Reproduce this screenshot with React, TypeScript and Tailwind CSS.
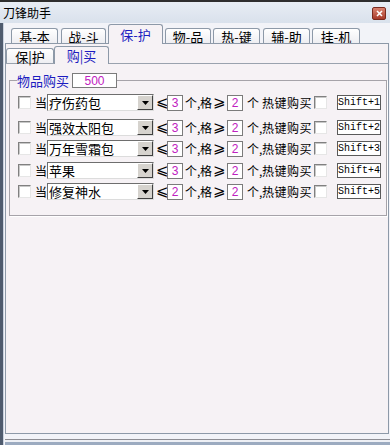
import React from 'react'

const cjk = "font-['Noto_Sans_CJK_SC','Noto_Sans_CJK_JP',sans-serif]"

const mainTabs = [
  { label: '基-本', w: 'w-[47px]', ml: 'ml-[6px]' },
  { label: '战-斗', w: 'w-[45px]', ml: 'ml-[3px]' },
  { label: '保-护', w: 'w-[55px]', ml: 'ml-[2px]', active: true },
  { label: '物-品', w: 'w-[46px]', ml: 'ml-[2px]' },
  { label: '热-键', w: 'w-[47px]', ml: 'ml-[2px]' },
  { label: '辅-助', w: 'w-[47px]', ml: 'ml-[3px]' },
  { label: '挂-机', w: 'w-[48px]', ml: 'ml-[2px]' },
]

const rows = [
  { item: '疗伤药包', lt: 3, gt: 2, key: 'Shift+1', sep: false, mt: 'mt-[6px]' },
  { item: '强效太阳包', lt: 3, gt: 2, key: 'Shift+2', sep: true, mt: 'mt-[8px]' },
  { item: '万年雪霜包', lt: 3, gt: 2, key: 'Shift+3', sep: true, mt: 'mt-[4px]' },
  { item: '苹果', lt: 3, gt: 2, key: 'Shift+4', sep: true, mt: 'mt-[5px]' },
  { item: '修复神水', lt: 2, gt: 2, key: 'Shift+5', sep: true, mt: 'mt-[4px]' },
]

const CheckBox = () => (
  <span className="block h-[13px] w-[13px] shrink-0 border border-t-[#808080] border-l-[#808080] border-b-[#e6e6e6] border-r-[#e6e6e6] bg-white shadow-[inset_1px_1px_0_#c8c8c8]" />
)

const NumBox = ({ v, ml }: { v: number; ml: string }) => (
  <span className={`${ml} flex h-[16px] w-[16px] shrink-0 items-center justify-center border border-[#7b7b7b] bg-white font-['Liberation_Sans',sans-serif] text-[12px] leading-none text-[#c020c0]`}>
    {v}
  </span>
)

const Combo = ({ value }: { value: string }) => (
  <div className="flex h-[17px] w-[107px] shrink-0 items-center border border-t-[#6e6e6e] border-l-[#6e6e6e] border-b-[#dcdcdc] border-r-[#dcdcdc] bg-white">
    <span className="flex-1 pl-[1px] text-[13px] leading-none text-black">{value}</span>
    <span className="flex h-[15px] w-[16px] items-center justify-center border border-t-white border-l-white border-b-[#404040] border-r-[#404040] bg-[#d6d3ce]">
      <svg width="7" height="4" viewBox="0 0 7 4">
        <path d="M0 0h7L3.5 4z" fill="#000" />
      </svg>
    </span>
  </div>
)

export default function App() {
  return (
    <div className={`flex h-[445px] w-[390px] flex-col overflow-hidden bg-[#f6f2f5] ${cjk}`}>
      {/* title bar */}
      <div className="flex h-[23px] shrink-0 items-center justify-between border-t-2 border-[#2e2e2e] bg-gradient-to-b from-[#e8edf4] to-[#d9e1ec] pl-[3px] pr-[4px]">
        <span className="text-[12px] leading-none text-black">刀锋助手</span>
        <span className="mt-[2px] flex h-[13px] w-[14px] items-center justify-center rounded-[2px] border border-[#7a2a1e] bg-gradient-to-b from-[#d9826f] to-[#a8392a]">
          <svg width="7" height="7" viewBox="0 0 7 7">
            <path d="M1 1l5 5M6 1L1 6" stroke="#fff" strokeWidth="1.6" />
          </svg>
        </span>
      </div>

      {/* window body */}
      <div className="flex flex-1 flex-col border-l-[3px] border-[#4f5b6e] bg-[#f2f3f8]">
        <div className="flex flex-1 flex-col border-l border-[#c9d1de] pl-[1px]">
          {/* main tabs */}
          <div className="flex h-[20px] shrink-0 items-end">
            {mainTabs.map((t) =>
              t.active ? (
                <div
                  key={t.label}
                  className={`${t.w} ${t.ml} relative z-10 -mb-[1px] flex h-[20px] items-center justify-center rounded-t-[3px] border border-b-0 border-[#8d99a8] bg-[#f6f2f5] text-[13px] leading-none text-[#1c1cc0]`}
                >
                  {t.label}
                </div>
              ) : (
                <div
                  key={t.label}
                  className={`${t.w} ${t.ml} flex h-[15px] items-center justify-center rounded-t-[3px] border border-b-0 border-[#8d99a8] bg-gradient-to-b from-white to-[#eeeef2] text-[13px] leading-none text-black`}
                >
                  {t.label}
                </div>
              ),
            )}
          </div>

          {/* main panel */}
          <div className="mr-[1px] flex flex-1 flex-col border border-[#8d99a8] bg-[#f6f2f5]">
            {/* sub tabs */}
            <div className="flex h-[20px] shrink-0 items-end border-b border-[#9aa2ae]">
              <div className="flex h-[15px] w-[48px] items-center justify-center rounded-t-[3px] border border-b-0 border-[#8d99a8] bg-gradient-to-b from-white to-[#eeeef2] text-[13px] leading-none text-black">
                保|护
              </div>
              <div className="relative z-10 -mb-[1px] flex h-[18px] w-[55px] items-center justify-center rounded-t-[3px] border border-b-0 border-[#8d99a8] bg-[#f6f2f5] text-[13px] leading-none text-[#1c1cc0]">
                购|买
              </div>
            </div>

            {/* group box */}
            <fieldset className="ml-[3px] mr-[1px] mt-[9px] border border-[#a6a3a9] pb-[15px] shadow-[1px_1px_0_#ffffff]">
              <legend className="ml-[7px] flex items-center">
                <span className="text-[13px] leading-none text-[#1c1cc0]">物品购买</span>
                <span className="ml-[3px] flex h-[15px] w-[45px] items-center justify-center border border-[#7b7b7b] bg-white font-['Liberation_Sans',sans-serif] text-[12px] leading-none text-[#c020c0]">
                  500
                </span>
              </legend>

              {rows.map((r) => (
                <div key={r.key} className={`flex h-[17px] items-center ${r.mt} text-[12px] leading-none text-black`}>
                  <span className="ml-[8px] shrink-0">
                    <CheckBox />
                  </span>
                  <span className="ml-[4px] w-[12px] shrink-0">当</span>
                  <Combo value={r.item} />
                  <span className="ml-[2px] w-[11px] shrink-0 font-['DejaVu_Sans',sans-serif] text-[15px]">⩽</span>
                  <NumBox v={r.lt} ml="ml-0" />
                  <span className="ml-[2px] w-[15px] shrink-0">个,</span>
                  <span className="w-[12px] shrink-0">格</span>
                  <span className="ml-[1px] w-[13px] shrink-0 font-['DejaVu_Sans',sans-serif] text-[15px]">⩾</span>
                  <NumBox v={r.gt} ml="ml-[1px]" />
                  <span className="ml-[4px] w-[15px] shrink-0">{r.sep ? '个,' : '个'}</span>
                  <span className="w-[52px] shrink-0 tracking-[0.5px]">热键购买</span>
                  <CheckBox />
                  <span className="ml-[10px] flex h-[15px] w-[44px] shrink-0 items-center justify-center border border-[#5a5a5a] bg-white font-['Liberation_Mono',monospace] text-[10px] leading-none text-black">
                    {r.key}
                  </span>
                </div>
              ))}
            </fieldset>

            <div className="flex-1" />
          </div>

          <div className="h-[5px] shrink-0 bg-[#f2f3f8]" />
          <div className="h-[1px] shrink-0 bg-[#8d8d93]" />
          <div className="h-[2px] shrink-0 bg-[#eef0f5]" />
          <div className="h-[3px] shrink-0 bg-[#9cabc0]" />
        </div>
      </div>
    </div>
  )
}
